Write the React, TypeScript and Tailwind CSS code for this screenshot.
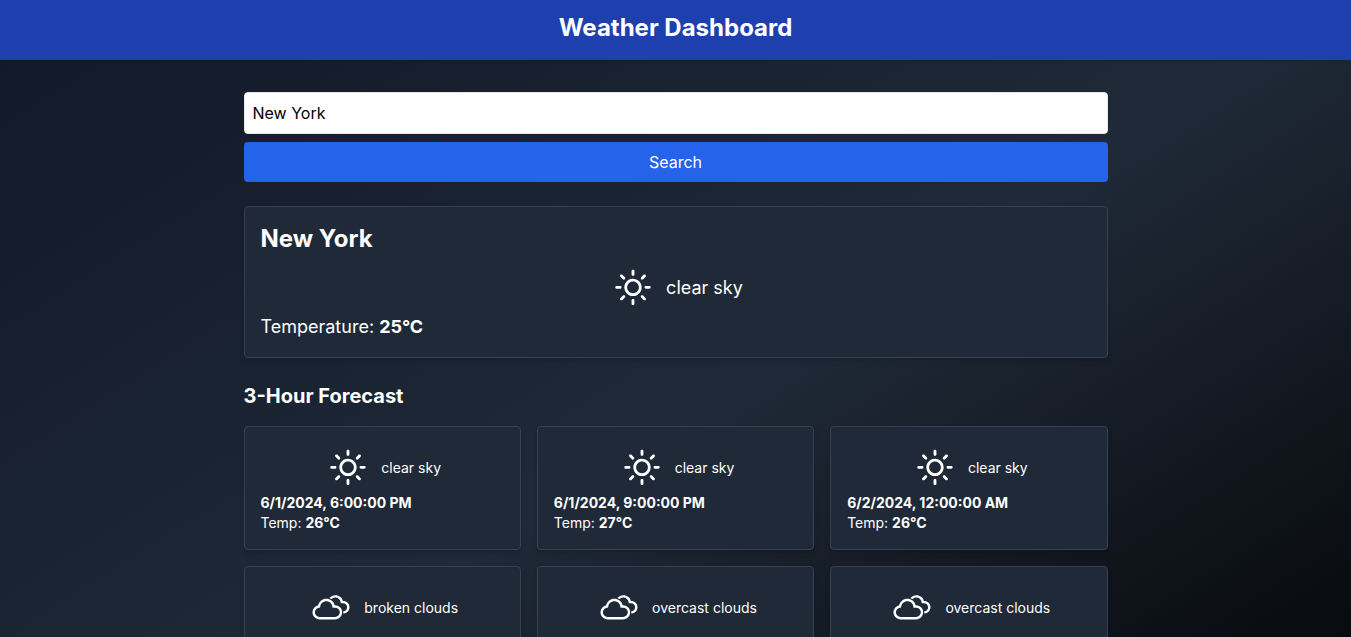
import React from 'react';
import { WiCloudy, WiDaySunny } from 'react-icons/wi';

type Forecast = { icon: 'sun' | 'cloud'; text: string; time: string; temp: string };

const forecasts: Forecast[] = [
  { icon: 'sun', text: 'clear sky', time: '6/1/2024, 6:00:00 PM', temp: '26°C' },
  { icon: 'sun', text: 'clear sky', time: '6/1/2024, 9:00:00 PM', temp: '27°C' },
  { icon: 'sun', text: 'clear sky', time: '6/2/2024, 12:00:00 AM', temp: '26°C' },
  { icon: 'cloud', text: 'broken clouds', time: '6/2/2024, 3:00:00 AM', temp: '24°C' },
  { icon: 'cloud', text: 'overcast clouds', time: '6/2/2024, 6:00:00 AM', temp: '22°C' },
  { icon: 'cloud', text: 'overcast clouds', time: '6/2/2024, 9:00:00 AM', temp: '21°C' },
];

function WeatherIcon({ icon }: { icon: Forecast['icon'] }) {
  const Icon = icon === 'sun' ? WiDaySunny : WiCloudy;
  return <Icon size={50} className="shrink-0 text-white" />;
}

export default function App() {
  return (
    <div className="h-screen overflow-hidden font-['Inter',sans-serif] text-white">
      <div className="h-[862px] bg-[linear-gradient(to_bottom_right,#111827,#1f2937,#000000)]">
        <header className="h-[60px] bg-[#1e40af] pt-3 text-center text-2xl font-bold shadow-sm">Weather Dashboard</header>
        <main className="mx-auto mt-8 w-[864px]">
          <input defaultValue="New York" className="block h-[42px] w-full rounded border border-[#e5e7eb] bg-white p-2 text-black" />
          <button className="mt-2 block h-10 w-full rounded bg-[#2563eb] p-2">Search</button>
          <section className="mt-6 rounded border border-[#374151] bg-[#1f2937] p-4 shadow-md">
            <h2 className="text-2xl font-bold">New York</h2>
            <div className="mt-2 flex items-center justify-center gap-2 text-lg">
              <WeatherIcon icon="sun" />
              <span>clear sky</span>
            </div>
            <p className="text-lg">Temperature: <b>25°C</b></p>
          </section>
          <h3 className="mt-6 mb-4 text-xl font-bold">3-Hour Forecast</h3>
          <div className="grid grid-cols-3 gap-4">
            {forecasts.map((f) => (
              <article key={f.time} className="rounded border border-[#374151] bg-[#1f2937] p-4 text-sm shadow-md">
                <div className="flex items-center justify-center gap-2">
                  <WeatherIcon icon={f.icon} />
                  <span>{f.text}</span>
                </div>
                <p className="font-bold">{f.time}</p>
                <p>Temp: <b>{f.temp}</b></p>
              </article>
            ))}
          </div>
        </main>
      </div>
    </div>
  );
}
